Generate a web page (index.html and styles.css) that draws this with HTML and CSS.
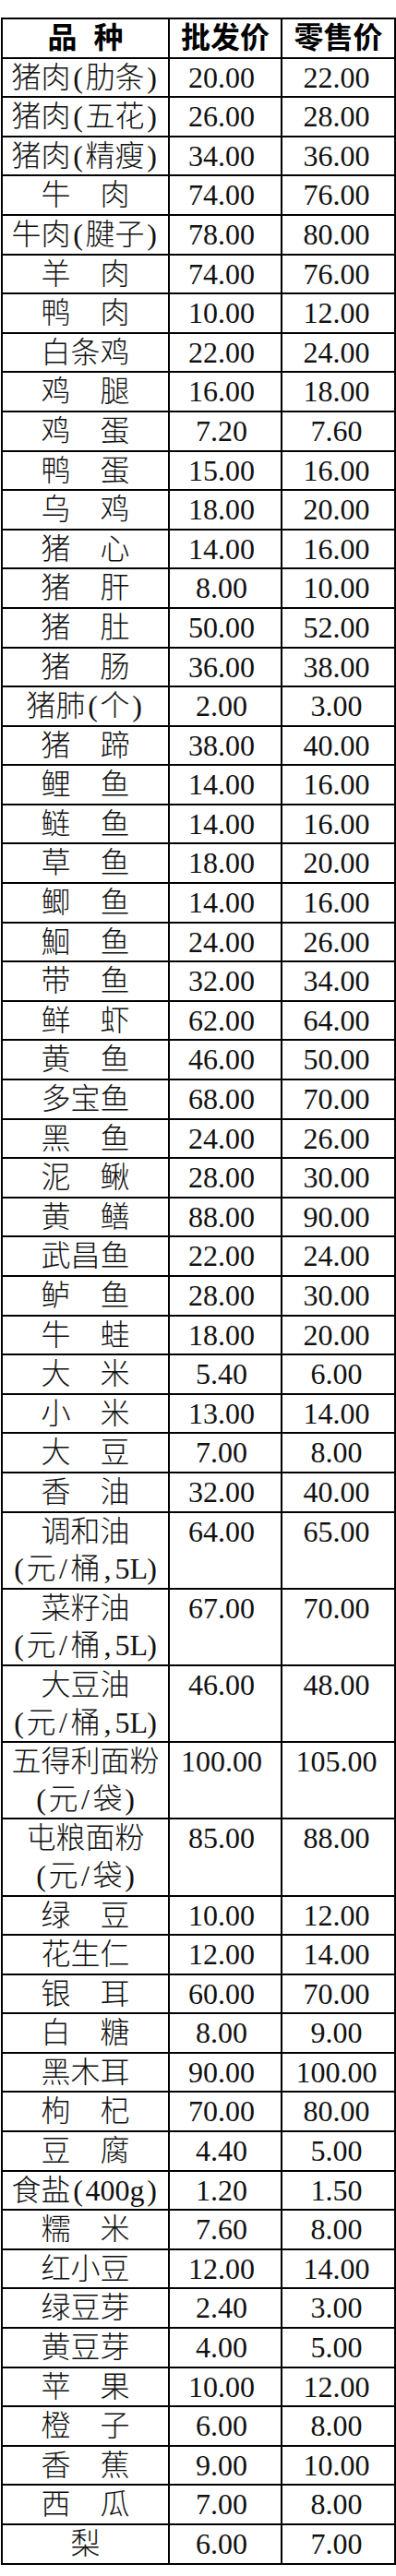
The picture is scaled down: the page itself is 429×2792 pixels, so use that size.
FILE: index.html
```html
<!DOCTYPE html>
<html lang="zh-CN">
<head>
<meta charset="utf-8">
<title>价格表</title>
<link rel="stylesheet" href="styles.css">
</head>
<body>
<table class="prices">
<colgroup><col class="c1"><col class="c2"><col class="c3"></colgroup>
<thead>
<tr><th>品<span class="gap"></span>种</th><th>批发价</th><th>零售价</th></tr>
</thead>
<tbody>
<tr><td>猪肉<i class="h">(</i>肋条<i class="h">)</i></td><td>20.00</td><td>22.00</td></tr>
<tr><td>猪肉<i class="h">(</i>五花<i class="h">)</i></td><td>26.00</td><td>28.00</td></tr>
<tr><td>猪肉<i class="h">(</i>精瘦<i class="h">)</i></td><td>34.00</td><td>36.00</td></tr>
<tr><td>牛　肉</td><td>74.00</td><td>76.00</td></tr>
<tr><td>牛肉<i class="h">(</i>腱子<i class="h">)</i></td><td>78.00</td><td>80.00</td></tr>
<tr><td>羊　肉</td><td>74.00</td><td>76.00</td></tr>
<tr><td>鸭　肉</td><td>10.00</td><td>12.00</td></tr>
<tr><td>白条鸡</td><td>22.00</td><td>24.00</td></tr>
<tr><td>鸡　腿</td><td>16.00</td><td>18.00</td></tr>
<tr><td>鸡　蛋</td><td>7.20</td><td>7.60</td></tr>
<tr><td>鸭　蛋</td><td>15.00</td><td>16.00</td></tr>
<tr><td>乌　鸡</td><td>18.00</td><td>20.00</td></tr>
<tr><td>猪　心</td><td>14.00</td><td>16.00</td></tr>
<tr><td>猪　肝</td><td>8.00</td><td>10.00</td></tr>
<tr><td>猪　肚</td><td>50.00</td><td>52.00</td></tr>
<tr><td>猪　肠</td><td>36.00</td><td>38.00</td></tr>
<tr><td>猪肺<i class="h">(</i>个<i class="h">)</i></td><td>2.00</td><td>3.00</td></tr>
<tr><td>猪　蹄</td><td>38.00</td><td>40.00</td></tr>
<tr><td>鲤　鱼</td><td>14.00</td><td>16.00</td></tr>
<tr><td>鲢　鱼</td><td>14.00</td><td>16.00</td></tr>
<tr><td>草　鱼</td><td>18.00</td><td>20.00</td></tr>
<tr><td>鲫　鱼</td><td>14.00</td><td>16.00</td></tr>
<tr><td>鮰　鱼</td><td>24.00</td><td>26.00</td></tr>
<tr><td>带　鱼</td><td>32.00</td><td>34.00</td></tr>
<tr><td>鲜　虾</td><td>62.00</td><td>64.00</td></tr>
<tr><td>黄　鱼</td><td>46.00</td><td>50.00</td></tr>
<tr><td>多宝鱼</td><td>68.00</td><td>70.00</td></tr>
<tr><td>黑　鱼</td><td>24.00</td><td>26.00</td></tr>
<tr><td>泥　鳅</td><td>28.00</td><td>30.00</td></tr>
<tr><td>黄　鳝</td><td>88.00</td><td>90.00</td></tr>
<tr><td>武昌鱼</td><td>22.00</td><td>24.00</td></tr>
<tr><td>鲈　鱼</td><td>28.00</td><td>30.00</td></tr>
<tr><td>牛　蛙</td><td>18.00</td><td>20.00</td></tr>
<tr><td>大　米</td><td>5.40</td><td>6.00</td></tr>
<tr><td>小　米</td><td>13.00</td><td>14.00</td></tr>
<tr><td>大　豆</td><td>7.00</td><td>8.00</td></tr>
<tr><td>香　油</td><td>32.00</td><td>40.00</td></tr>
<tr><td>调和油<br><i class="h">(</i>元<i class="h">/</i>桶<i class="h">,</i><i class="h">5</i><i class="h">L</i><i class="h">)</i></td><td>64.00</td><td>65.00</td></tr>
<tr><td>菜籽油<br><i class="h">(</i>元<i class="h">/</i>桶<i class="h">,</i><i class="h">5</i><i class="h">L</i><i class="h">)</i></td><td>67.00</td><td>70.00</td></tr>
<tr><td>大豆油<br><i class="h">(</i>元<i class="h">/</i>桶<i class="h">,</i><i class="h">5</i><i class="h">L</i><i class="h">)</i></td><td>46.00</td><td>48.00</td></tr>
<tr><td>五得利面粉<br><i class="h">(</i>元<i class="h">/</i>袋<i class="h">)</i></td><td>100.00</td><td>105.00</td></tr>
<tr><td>屯粮面粉<br><i class="h">(</i>元<i class="h">/</i>袋<i class="h">)</i></td><td>85.00</td><td>88.00</td></tr>
<tr><td>绿　豆</td><td>10.00</td><td>12.00</td></tr>
<tr><td>花生仁</td><td>12.00</td><td>14.00</td></tr>
<tr><td>银　耳</td><td>60.00</td><td>70.00</td></tr>
<tr><td>白　糖</td><td>8.00</td><td>9.00</td></tr>
<tr><td>黑木耳</td><td>90.00</td><td>100.00</td></tr>
<tr><td>枸　杞</td><td>70.00</td><td>80.00</td></tr>
<tr><td>豆　腐</td><td>4.40</td><td>5.00</td></tr>
<tr><td>食盐<i class="h">(</i><i class="h">4</i><i class="h">0</i><i class="h">0</i><i class="h">g</i><i class="h">)</i></td><td>1.20</td><td>1.50</td></tr>
<tr><td>糯　米</td><td>7.60</td><td>8.00</td></tr>
<tr><td>红小豆</td><td>12.00</td><td>14.00</td></tr>
<tr><td>绿豆芽</td><td>2.40</td><td>3.00</td></tr>
<tr><td>黄豆芽</td><td>4.00</td><td>5.00</td></tr>
<tr><td>苹　果</td><td>10.00</td><td>12.00</td></tr>
<tr><td>橙　子</td><td>6.00</td><td>8.00</td></tr>
<tr><td>香　蕉</td><td>9.00</td><td>10.00</td></tr>
<tr><td>西　瓜</td><td>7.00</td><td>8.00</td></tr>
<tr><td>梨</td><td>6.00</td><td>7.00</td></tr>
</tbody>
</table>
</body>
</html>
```
FILE: styles.css
```css
html, body {
  margin: 0;
  padding: 0;
  background: #fff;
}

.prices {
  margin: 19px 0 0 1px;
  width: 426px;
  border-collapse: collapse;
  table-layout: fixed;
  font-family: "Liberation Serif", "Noto Sans CJK SC", serif;
  font-size: 32px;
  color: #111;
}

.c1 { width: 181px; }
.c2 { width: 122px; }
.c3 { width: 123px; }

.prices th,
.prices td {
  border: 2px solid #000;
  padding: 0;
  line-height: 40.6px;
  text-align: center;
  vertical-align: top;
  white-space: nowrap;
}

.prices th {
  font-family: "Liberation Serif", "Noto Sans CJK SC", sans-serif;
  font-weight: 700;
  color: #000;
}

.prices td {
  font-weight: 300;
}

.prices td:nth-child(2) {
  padding-right: 8px;
}

.prices td:nth-child(3) {
  padding-right: 4px;
}

.gap {
  display: inline-block;
  width: 18px;
}

.h {
  display: inline-block;
  width: 0.5em;
  text-align: center;
  font-style: normal;
  font-family: "Liberation Serif", serif;
}
```
